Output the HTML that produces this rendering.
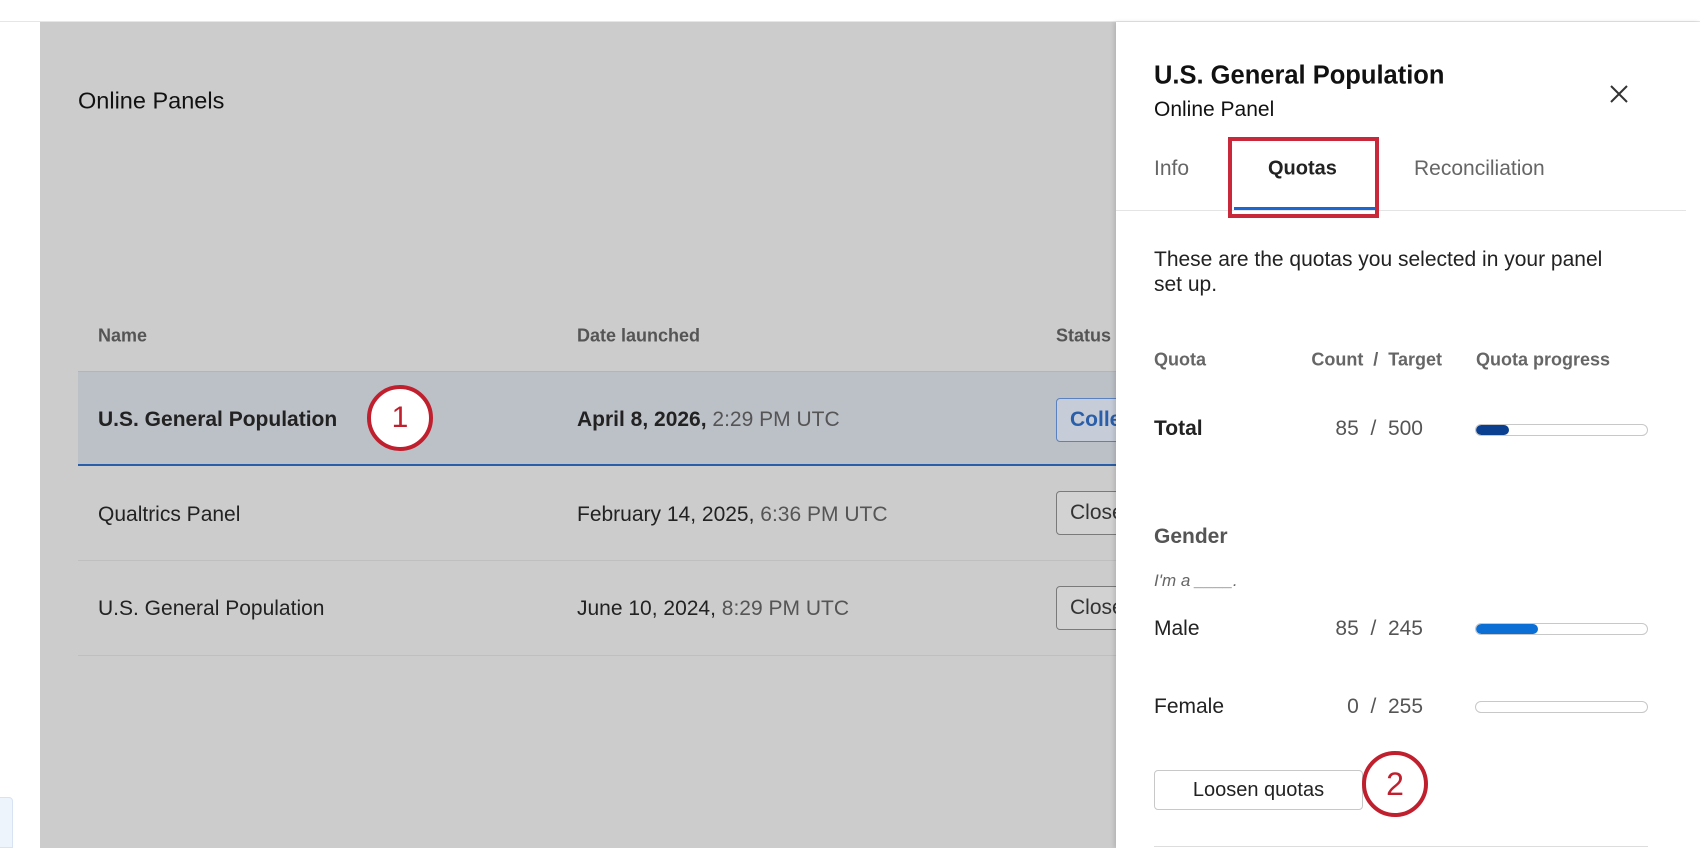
<!DOCTYPE html>
<html><head><meta charset="utf-8"><style>
*{box-sizing:border-box;margin:0;padding:0}
body{width:1700px;height:848px;overflow:hidden;background:#fff;font-family:"Liberation Sans",sans-serif;position:relative;color:#222}
.a{position:absolute;white-space:nowrap}
.bg{position:absolute;left:40px;top:22px;width:1076px;height:826px;background:#cccccc}
.line{position:absolute;height:1px;background:#bfbfbf}
.btn{position:absolute;left:1056px;width:70px;height:44px;border:1px solid #7a7a7a;border-radius:4px;background:#d2d2d2;font-size:21px;line-height:42px;padding-left:13px;overflow:hidden;color:#333}
.circ{position:absolute;width:66px;height:66px;border:4px solid #c01f2e;border-radius:50%;background:#fff;color:#c01f2e;font-size:30px;text-align:center;line-height:58px}
.bar{position:absolute;left:1475px;width:173px;height:12px;border:1px solid #c8c8c8;border-radius:6px;background:#fff;overflow:hidden}
.bar i{display:block;height:100%;border-radius:6px}
.t{font-size:21px;transform:translateY(-50%)}
</style></head><body>
<div class="line" style="left:0;top:21px;width:1700px;background:#e6e6e6"></div>
<div class="bg"></div>
<div style="position:absolute;left:0;top:797px;width:13px;height:51px;background:#eef4fb;border:1px solid #d7e3f2;border-left:none;border-radius:0 4px 0 0"></div>
<div class="a t" style="left:78px;top:101px;font-size:23.5px;color:#111">Online Panels</div>
<div class="a t" style="left:98px;top:336px;font-size:18px;font-weight:bold;color:#555">Name</div>
<div class="a t" style="left:577px;top:336px;font-size:18px;font-weight:bold;color:#555">Date launched</div>
<div class="a t" style="left:1056px;top:336px;font-size:18px;font-weight:bold;color:#555">Status</div>
<div class="line" style="left:78px;top:371px;width:1040px;background:#b5b5b5"></div>
<div style="position:absolute;left:78px;top:372px;width:1040px;height:94px;background:#bcc0c7;border-bottom:2px solid #2a5ea8"></div>
<div class="a t" style="left:98px;top:420px;font-weight:bold;color:#222">U.S. General Population</div>
<div class="a t" style="left:577px;top:420px;color:#222"><b>April 8, 2026,</b> <span style="color:#555">2:29 PM UTC</span></div>
<div class="btn" style="top:398px;border-color:#5a82c0;background:#c6cdd8;color:#2a5ea8;font-weight:bold">Collected</div>
<div class="a t" style="left:98px;top:515px">Qualtrics Panel</div>
<div class="a t" style="left:577px;top:515px">February 14, 2025, <span style="color:#555">6:36 PM UTC</span></div>
<div class="btn" style="top:491px">Closed</div>
<div class="line" style="left:78px;top:560px;width:1040px"></div>
<div class="a t" style="left:98px;top:609px">U.S. General Population</div>
<div class="a t" style="left:577px;top:609px">June 10, 2024, <span style="color:#555">8:29 PM UTC</span></div>
<div class="btn" style="top:586px">Closed</div>
<div class="line" style="left:78px;top:655px;width:1040px"></div>
<div class="circ" style="left:367px;top:385px">1</div>

<div style="position:absolute;left:1116px;top:22px;width:584px;height:826px;background:#fff;box-shadow:-2px 0 4px rgba(0,0,0,.12)"></div>
<div class="a t" style="left:1154px;top:76px;font-size:25.5px;font-weight:bold;color:#111">U.S. General Population</div>
<div class="a t" style="left:1154px;top:110px;color:#111">Online Panel</div>
<svg class="a" style="left:1609px;top:84px" width="20" height="20" viewBox="0 0 20 20"><path d="M2 2L18 18M18 2L2 18" stroke="#333" stroke-width="2"/></svg>
<div class="a t" style="left:1154px;top:169px;color:#666">Info</div>
<div class="a t" style="left:1268px;top:169px;color:#222;font-weight:bold;font-size:20px">Quotas</div>
<div class="a t" style="left:1414px;top:169px;color:#666">Reconciliation</div>
<div class="line" style="left:1116px;top:210px;width:570px;background:#e4e4e4"></div>
<div style="position:absolute;left:1234px;top:207px;width:141px;height:3px;background:#1a66d2"></div>
<div style="position:absolute;left:1228px;top:137px;width:151px;height:81px;border:4px solid #c8283a"></div>
<div class="a" style="left:1154px;top:247px;font-size:21px;line-height:25px;color:#222">These are the quotas you selected in your panel<br>set up.</div>
<div class="a t" style="left:1154px;top:360px;font-size:18px;font-weight:bold;color:#666">Quota</div>
<div class="a t" style="right:258px;top:360px;font-size:18px;font-weight:bold;color:#666">Count&nbsp; /&nbsp; Target</div>
<div class="a t" style="left:1476px;top:360px;font-size:18px;font-weight:bold;color:#666">Quota progress</div>
<div class="a t" style="left:1154px;top:429px;font-weight:bold">Total</div>
<div class="a t" style="right:277px;top:429px;color:#555">85&nbsp; /&nbsp; 500</div>
<div class="bar" style="top:424px"><i style="width:33px;background:#0b3f8f"></i></div>
<div class="a t" style="left:1154px;top:537px;font-weight:bold;color:#555">Gender</div>
<div class="a t" style="left:1154px;top:581px;font-size:17px;font-style:italic;color:#666">I'm a ____.</div>
<div class="a t" style="left:1154px;top:629px">Male</div>
<div class="a t" style="right:277px;top:629px;color:#555">85&nbsp; /&nbsp; 245</div>
<div class="bar" style="top:623px"><i style="width:62px;background:#0b6fd6"></i></div>
<div class="a t" style="left:1154px;top:707px">Female</div>
<div class="a t" style="right:277px;top:707px;color:#555">0&nbsp; /&nbsp; 255</div>
<div class="bar" style="top:701px"></div>
<div style="position:absolute;left:1154px;top:770px;width:209px;height:40px;border:1px solid #c8c8c8;border-radius:4px;font-size:20px;text-align:center;line-height:38px;color:#222">Loosen quotas</div>
<div class="circ" style="left:1362px;top:751px;font-size:32px">2</div>
<div class="line" style="left:1154px;top:846px;width:494px;background:#ddd"></div>
</body></html>
